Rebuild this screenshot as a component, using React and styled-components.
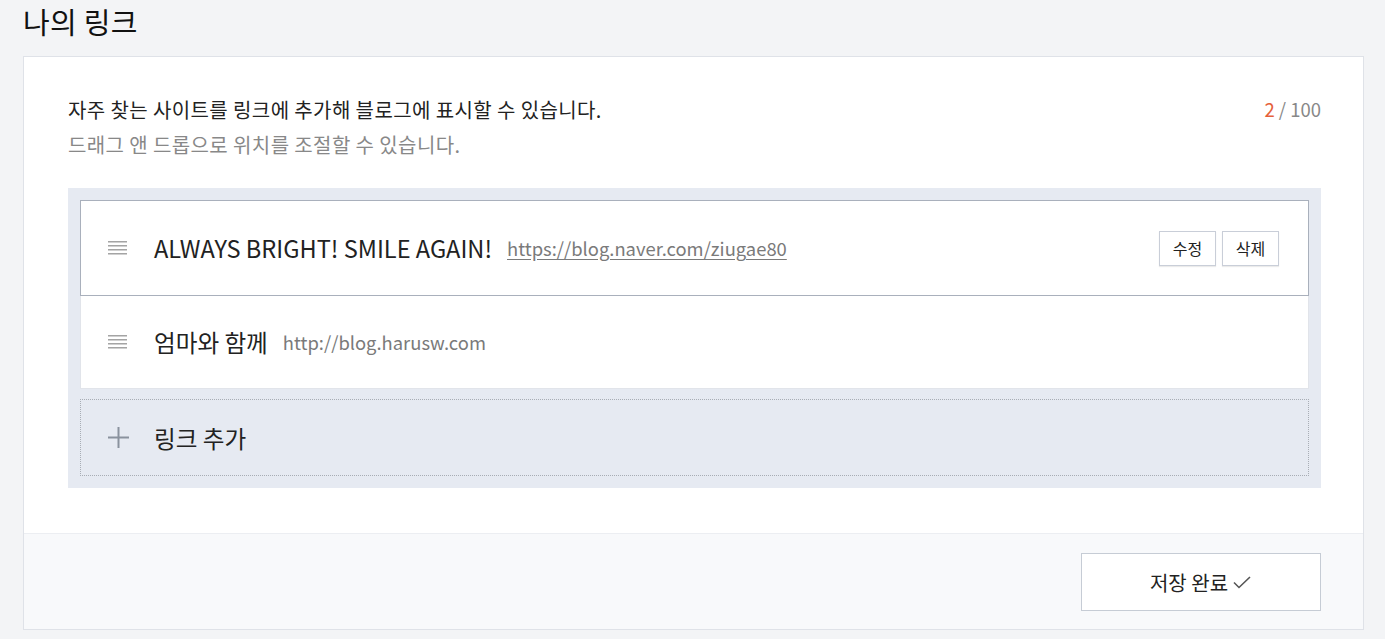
import React from "react";
import styled, { createGlobalStyle } from "styled-components";

const Global = createGlobalStyle`
  html, body { margin: 0; padding: 0; background: #f3f4f6; }
  body { font-family: "Noto Sans CJK KR", "Noto Sans", sans-serif; color: #222; }
  * { box-sizing: border-box; }
`;

const Page = styled.div`
  padding: 0 21px 10px 23px;
  width: 1385px;
  height: 639px;
  overflow: hidden;
`;

const Title = styled.h1`
  margin: 0;
  height: 56px;
  padding-top: 3px;
  font-size: 29px;
  font-weight: 400;
  line-height: 36px;
  letter-spacing: 0.3px;
  color: #111;
`;

const Card = styled.section`
  background: #fff;
  border: 1px solid #dfe2e8;
  display: flex;
  flex-direction: column;
`;

const Body = styled.div`
  padding: 35px 42px 45px 44px;
`;

const IntroRow = styled.div`
  display: flex;
  justify-content: space-between;
  align-items: flex-start;
  margin-bottom: 26px;
`;

const Intro = styled.div`
  font-size: 20px;
  line-height: 35px;
  letter-spacing: 0.4px;
`;

const Line = styled.p`
  margin: 0;
  color: ${(p) => (p.$muted ? "#888" : "#222")};
`;

const Counter = styled.div`
  font-size: 18.5px;
  line-height: 35px;
  color: #888;
`;

const Count = styled.span`
  color: #e5613a;
`;

const List = styled.div`
  background: #e6eaf2;
  padding: 12px;
  display: flex;
  flex-direction: column;
`;

const Item = styled.div`
  display: flex;
  align-items: center;
  height: ${(p) => (p.$active ? "96px" : "93px")};
  background: #fff;
  border: 1px solid ${(p) => (p.$active ? "#a9b0bc" : "#e1e4ea")};
  border-top: ${(p) => (p.$active ? "1px solid #a9b0bc" : "none")};
  padding: 0 29px 0 27px;
`;

const Handle = styled.span`
  width: 19px;
  height: 15px;
  display: flex;
  flex-direction: column;
  justify-content: space-between;
  margin-right: 27px;
  flex-shrink: 0;
  & > i {
    display: block;
    height: 2px;
    background: #a4a4a4;
    border-bottom: 1px solid #d0d0d0;
  }
`;

const Name = styled.span`
  font-size: 23.6px;
  color: #222;
  margin-right: 15px;
  white-space: nowrap;
`;

const Url = styled.a`
  font-size: 18.4px;
  color: #7a7a7a;
  text-decoration: ${(p) => (p.$underline ? "underline" : "none")};
  text-underline-offset: 3px;
`;

const Actions = styled.div`
  margin-left: auto;
  display: flex;
  gap: 6px;
`;

const SmallButton = styled.button`
  width: 57px;
  height: 35px;
  background: #fff;
  border: 1px solid #c9ced8;
  box-shadow: 0 1px 1px rgba(0, 0, 0, 0.08);
  font-family: inherit;
  font-size: 16px;
  color: #222;
  padding: 0;
  cursor: pointer;
`;

const AddItem = styled.div`
  margin-top: 10px;
  height: 77px;
  border: 1px dotted #a8adb5;
  display: flex;
  align-items: center;
  padding-left: 27px;
  font-size: 23.6px;
  color: #222;
`;

const Plus = styled.svg`
  width: 21px;
  height: 21px;
  margin-right: 25px;
  flex-shrink: 0;
`;

const Footer = styled.div`
  border-top: 1px solid #eceef2;
  background: #f8f9fb;
  padding: 19px 42px 18px;
  display: flex;
  justify-content: flex-end;
`;

const SaveButton = styled.button`
  width: 240px;
  height: 58px;
  background: #fff;
  border: 1px solid #c6ccd5;
  font-family: inherit;
  font-size: 20px;
  color: #222;
  display: flex;
  align-items: center;
  justify-content: center;
  gap: 4px;
  cursor: pointer;
`;

export default function App() {
  return (
    <>
      <Global />
      <Page>
        <Title>나의 링크</Title>
        <Card>
          <Body>
            <IntroRow>
              <Intro>
                <Line>자주 찾는 사이트를 링크에 추가해 블로그에 표시할 수 있습니다.</Line>
                <Line $muted>드래그 앤 드롭으로 위치를 조절할 수 있습니다.</Line>
              </Intro>
              <Counter>
                <Count>2</Count> / 100
              </Counter>
            </IntroRow>
            <List>
              <Item $active>
                <Handle><i /><i /><i /><i /></Handle>
                <Name>ALWAYS BRIGHT! SMILE AGAIN!</Name>
                <Url $underline>https://blog.naver.com/ziugae80</Url>
                <Actions>
                  <SmallButton>수정</SmallButton>
                  <SmallButton>삭제</SmallButton>
                </Actions>
              </Item>
              <Item>
                <Handle><i /><i /><i /><i /></Handle>
                <Name>엄마와 함께</Name>
                <Url>http://blog.harusw.com</Url>
              </Item>
              <AddItem>
                <Plus viewBox="0 0 21 21">
                  <path d="M10.5 0v21M0 10.5h21" stroke="#8a929e" strokeWidth="2" fill="none" />
                </Plus>
                링크 추가
              </AddItem>
            </List>
          </Body>
          <Footer>
            <SaveButton>
              저장 완료
              <svg width="20" height="16" viewBox="0 0 20 16">
                <path d="M2 8.5l5 5L18 3" stroke="#555" strokeWidth="1.6" fill="none" />
              </svg>
            </SaveButton>
          </Footer>
        </Card>
      </Page>
    </>
  );
}
